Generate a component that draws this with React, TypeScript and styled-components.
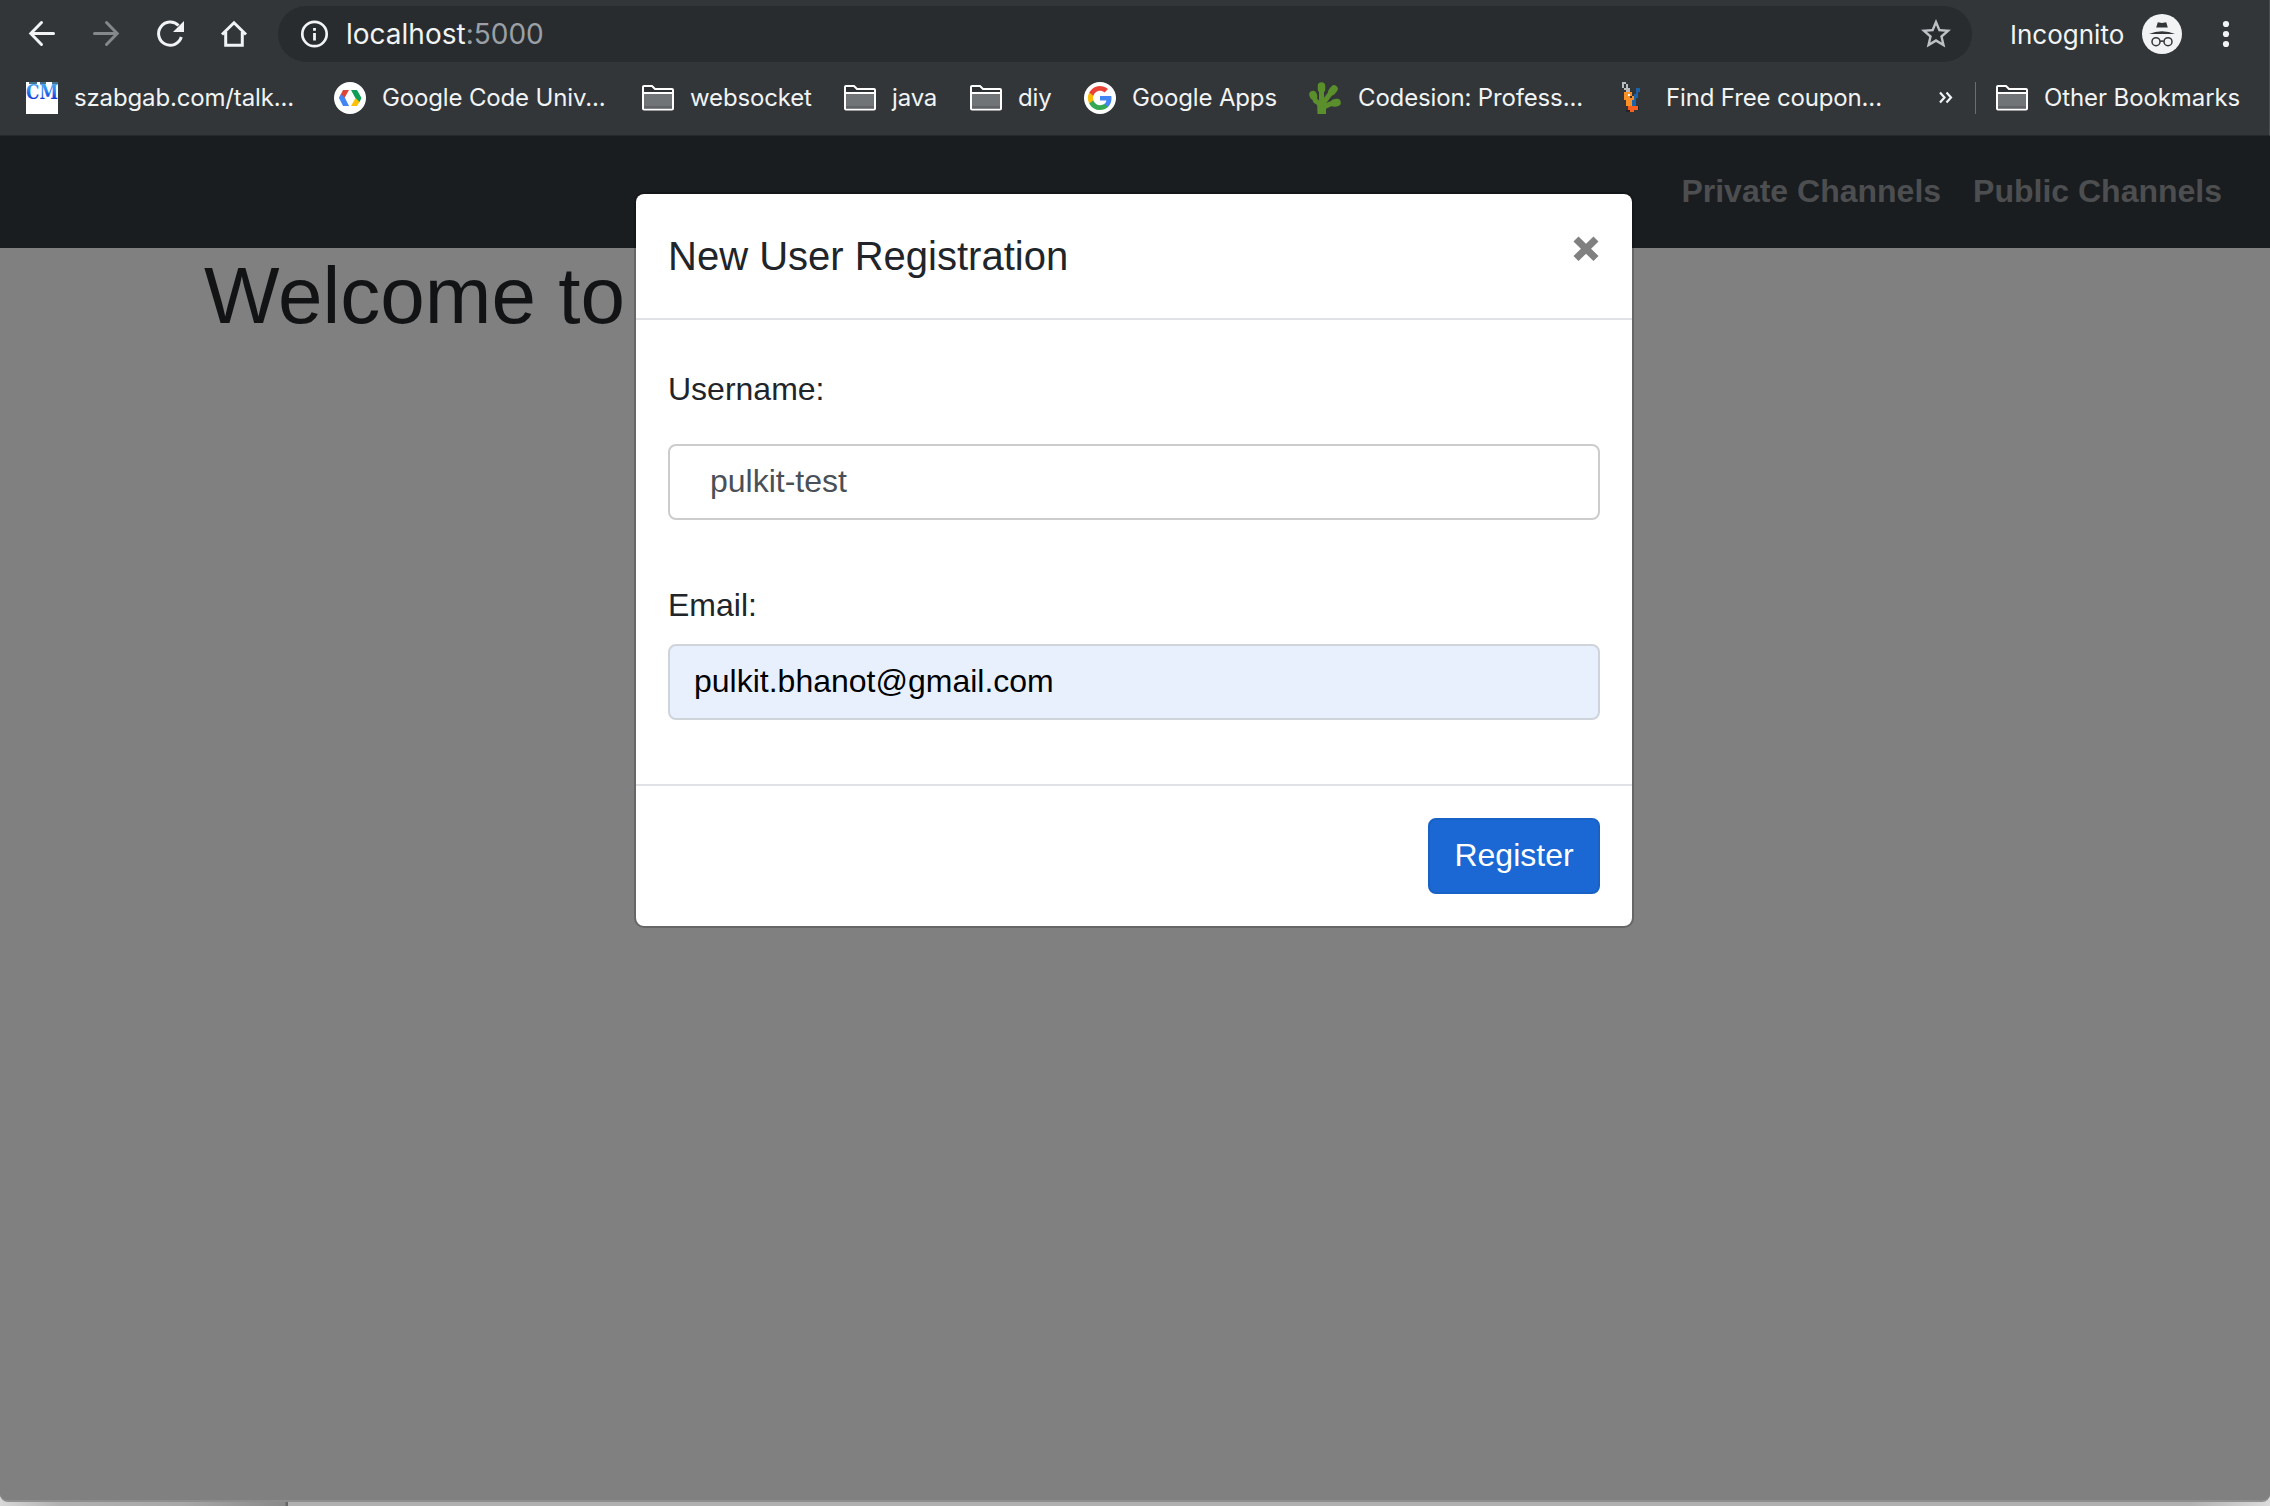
import React from "react";
import styled, { createGlobalStyle } from "styled-components";

const Global = createGlobalStyle`
  * { box-sizing: border-box; }
  html, body { margin: 0; padding: 0; }
  body { font-family: "Liberation Sans", Arial, sans-serif; background: #b0b0b0; overflow: hidden; }
  button { font: inherit; border: 0; padding: 0; background: none; display: block; }
  svg { display: block; flex: none; overflow: visible; }
`;

const Desktop = styled.div`
  width: 2270px;
  height: 1506px;
  display: flex;
  flex-direction: column;
  background: linear-gradient(90deg, #d8d8d8 0, #b0b0b0 60px, #a8a8a8 180px, #8a8a8a 285px, #666 286px, #666 288px, #b0b0b0 288px, #b0b0b0 2190px, #dcdcdc 2270px);
`;

const BrowserWindow = styled.div`
  height: 1502px;
  display: flex;
  flex-direction: column;
  border-radius: 0 0 8px 8px;
  overflow: hidden;
  background: #808080;
  border-bottom: 2px solid #8e8e8e;
`;

const Chrome = styled.header`
  height: 136px;
  flex: none;
  background: #323639;
  color: #f1f3f4;
  border-bottom: 1px solid #26292c;
  border-right: 1px solid #4b4e51;
  font-family: Inter, sans-serif;
`;

const Toolbar = styled.div`
  display: flex;
  align-items: center;
  height: 68px;
  padding: 0 0 0 26px;
`;

const NavButtons = styled.div`
  display: flex;
  gap: 32px;
`;

const Omnibox = styled.div`
  display: flex;
  align-items: center;
  width: 1694px;
  height: 56px;
  margin-left: 28px;
  padding: 0 18px 0 20px;
  border-radius: 28px;
  background: #292c2f;
`;

const Url = styled.div`
  flex: 1;
  margin-left: 14px;
  font-size: 28px;
  white-space: nowrap;
  color: #f1f3f4;
  span { color: #9aa0a6; }
`;

const Profile = styled.div`
  display: flex;
  align-items: center;
  justify-content: space-between;
  width: 172px;
  margin-left: 38px;
`;

const Label = styled.span<{ $size?: number; $spacing?: number; $lift?: number }>`
  font-size: ${(p) => p.$size ?? 24}px;
  letter-spacing: ${(p) => p.$spacing ?? -0.15}px;
  padding-bottom: ${(p) => p.$lift ?? 0}px;
  white-space: nowrap;
`;

const Kebab = styled.div`
  margin-left: 40px;
`;

const BookmarksBar = styled.div`
  display: flex;
  align-items: center;
  height: 60px;
  padding-left: 26px;
`;

const Bookmark = styled.div<{ $width: number; $gap?: number }>`
  display: flex;
  align-items: center;
  flex: none;
  gap: ${(p) => p.$gap ?? 16}px;
  width: ${(p) => p.$width}px;
`;

const Overflow = styled.div`
  width: 36px;
  flex: none;
`;

const Divider = styled.div`
  width: 1px;
  height: 32px;
  margin-right: 20px;
  background: #6b6e71;
`;

const Page = styled.main`
  flex: 1;
  display: grid;
  grid-template: 1fr / 1fr;
  background: #808080;
`;

const Content = styled.div`
  grid-area: 1 / 1;
`;

const Navbar = styled.nav`
  display: flex;
  justify-content: flex-end;
  gap: 32px;
  height: 112px;
  padding: 37px 48px 0 0;
  background: #1a1d20;
`;

const NavLink = styled.a`
  font-size: 32px;
  line-height: 36px;
  font-weight: 700;
  color: #4d4e50;
`;

const Welcome = styled.h1`
  margin: 0;
  padding: 0 0 0 204px;
  font-size: 80px;
  line-height: 96px;
  font-weight: 400;
  color: #121315;
`;

const Dialog = styled.section`
  grid-area: 1 / 1;
  justify-self: start;
  align-self: start;
  z-index: 1;
  width: 1000px;
  height: 736px;
  margin: 56px 0 0 634px;
  display: flex;
  flex-direction: column;
  border: 2px solid rgba(0, 0, 0, 0.2);
  border-radius: 10px;
  background: #fff;
  background-clip: padding-box;
  color: #212529;
`;

const DialogHeader = styled.div`
  display: flex;
  justify-content: space-between;
  height: 126px;
  padding: 32px;
  border-bottom: 2px solid #dee2e6;
`;

const DialogTitle = styled.h5`
  margin: 0;
  font-size: 40px;
  line-height: 60px;
  font-weight: 400;
`;

const CloseButton = styled.button`
  height: 44px;
  margin-right: 1px;
`;

const DialogBody = styled.form`
  flex: 1;
  padding: 0 32px;
`;

const Field = styled.div<{ $top: number; $gap: number }>`
  display: flex;
  flex-direction: column;
  gap: ${(p) => p.$gap}px;
  padding-top: ${(p) => p.$top}px;
`;

const FieldLabel = styled.label`
  font-size: 32px;
  line-height: 48px;
`;

const Input = styled.input<{ $filled?: boolean }>`
  height: 76px;
  padding: 0 ${(p) => (p.$filled ? 24 : 40)}px 2px;
  border: 2px solid ${(p) => (p.$filled ? "#ced4da" : "#cccccc")};
  border-radius: 8px;
  outline: 0;
  font: 32px/48px "Liberation Sans", Arial, sans-serif;
  color: ${(p) => (p.$filled ? "#000" : "#495057")};
  background: ${(p) => (p.$filled ? "#e8f0fe" : "#fff")};
`;

const DialogFooter = styled.div`
  display: flex;
  justify-content: flex-end;
  height: 142px;
  padding: 32px;
  border-top: 2px solid #dee2e6;
`;

const RegisterButton = styled.button`
  width: 172px;
  height: 76px;
  border: 2px solid #1862c6;
  border-radius: 8px;
  background: #1b68d5;
  color: #fff;
  font-size: 32px;
  line-height: 70px;
  padding-bottom: 2px;
`;

const Arrow = ({ forward }: { forward?: boolean }) => (
  <svg width="32" height="32" viewBox="-3 -3 32 32" fill="none" stroke={forward ? "#85888a" : "#f1f3f4"} strokeWidth="3">
    <g transform={forward ? "matrix(-1 0 0 1 26 0)" : undefined} strokeLinecap="round">
      <path d="M24.500 12.500H2M12.500 1.500 1.800 12.500 12.500 23.500" />
    </g>
  </svg>
);

const Reload = () => (
  <svg width="32" height="32" viewBox="-3 -3 32 32">
    <path d="M21.5 4.5A11.6 11.6 0 1 0 24.3 16" fill="none" stroke="#f1f3f4" strokeWidth="3" />
    <path d="M27 0V11H16Z" fill="#f1f3f4" />
  </svg>
);

const Home = () => (
  <svg width="32" height="32" viewBox="-3 -3 32 32" fill="none" stroke="#f1f3f4" strokeWidth="3">
    <path d="M1 13.5 13 1.8 25 13.5M4.7 11V24.3H21.3V11" />
  </svg>
);

const Info = () => (
  <svg width="34" height="34" viewBox="0 0 34 34">
    <circle cx="16.5" cy="17" r="12.200" fill="none" stroke="#f1f3f4" strokeWidth="2.7" />
    <path d="M15.1 11h2.8v2.8h-2.8zM15.1 16h2.8v7.4h-2.8z" fill="#f1f3f4" />
  </svg>
);

const Star = () => (
  <svg width="36" height="36" viewBox="0 0 24 24" fill="#bdc1c6">
    <path d="M22 9.24l-7.19-.62L12 2 9.19 8.63 2 9.24l5.46 4.73L5.82 21 12 17.27 18.18 21l-1.63-7.03L22 9.24zM12 15.4l-3.76 2.27 1-4.28-3.32-2.88 4.38-.38L12 6.1l1.71 4.04 4.38.38-3.32 2.88 1 4.28L12 15.4z" />
  </svg>
);

const Incognito = () => (
  <svg width="40" height="40" viewBox="0 0 40 40">
    <circle cx="20" cy="20" r="20" fill="#f1f3f4" />
    <path d="M15.8 8.2 20 9l4.2-.8L25.8 13.5H14.2ZM7 20.1Q13 17.3 20 17.3T33 20.1Z" fill="#323639" />
    <g fill="none" stroke="#323639" strokeWidth="1.5">
      <circle cx="14" cy="27.7" r="4" />
      <circle cx="26" cy="27.7" r="4" />
      <path d="M18 27.5q2-1.2 4 0" />
    </g>
  </svg>
);

const Dots = () => (
  <svg width="8" height="28" viewBox="0 0 8 28" fill="#f1f3f4">
    <circle cx="4" cy="4" r="3.1" />
    <circle cx="4" cy="14" r="3.1" />
    <circle cx="4" cy="24" r="3.1" />
  </svg>
);

const Folder = () => (
  <svg width="32" height="32" viewBox="0 0 32 32">
    <path d="M1 26.500V5Q1 4 2 4H10L13 7H30Q31 7 31 8V26.500Q31 27.500 30 27.500H2Q1 27.500 1 26.500Z" fill="#2d3134" stroke="#fff" strokeWidth="2" />
    <path d="M2 12h28v14.500H2Z" fill="#707477" />
    <path d="M1 11h30" stroke="#fff" strokeWidth="2" />
    <path d="M2 25h28" stroke="#606467" strokeWidth="2" />
  </svg>
);

const MediaIcon = () => (
  <svg width="32" height="32" viewBox="0 0 32 32">
    <defs>
      <linearGradient id="cm" gradientUnits="userSpaceOnUse" x1="0" y1="0" x2="0" y2="17">
        <stop offset="0" stopColor="#55aeee" />
        <stop offset="0.5" stopColor="#2f86f0" />
        <stop offset="1" stopColor="#1238dc" />
      </linearGradient>
    </defs>
    <path d="M0 0h32v32H0z" fill="#fff" />
    <path d="M3 0h8v2H3zM14 0h6v2h-6zM26 0h6v2h-6z" fill="#44748c" />
    <text x="0" y="16.500" textLength="32" lengthAdjust="spacingAndGlyphs" fontFamily="DejaVu Serif, serif" fontWeight="700" fontSize="21" fill="url(#cm)">CM</text>
  </svg>
);

const CodeIcon = () => (
  <svg width="32" height="32" viewBox="0 0 32 32">
    <circle cx="16" cy="16" r="16" fill="#fff" />
    <path d="M9 8h6l-4.500 8H5Z" fill="#db4437" />
    <path d="M5 16 7 12 11 16 15 24H9Z" fill="#4285f4" />
    <path d="M17 8h6l4.500 8-2 4H23.500Z" fill="#0f9d58" />
    <path d="M21.500 16 25.500 20 23 24h-6Z" fill="#ffc107" />
  </svg>
);

const GoogleIcon = () => (
  <svg width="32" height="32" viewBox="0 0 32 32">
    <circle cx="16" cy="16" r="16" fill="#fff" />
    <g transform="translate(4 4)">
      <path fill="#4285f4" d="M23.500 12.300c0-.8-.1-1.600-.2-2.300H12v4.500h6.500a5.500 5.500 0 0 1-2.400 3.600v3h3.900c2.200-2.100 3.500-5.100 3.500-8.800z" />
      <path fill="#34a853" d="M12 24c3.200 0 6-1.100 8-2.900l-3.900-3c-1.100.7-2.500 1.200-4.100 1.200-3.100 0-5.800-2.100-6.700-5H1.200v3.100A12 12 0 0 0 12 24z" />
      <path fill="#fbbc05" d="M5.300 14.300a7.200 7.200 0 0 1 0-4.600V6.600H1.200a12 12 0 0 0 0 10.800z" />
      <path fill="#ea4335" d="M12 4.800c1.800 0 3.300.6 4.600 1.800L20 3.100A12 12 0 0 0 1.200 6.600l4.100 3.100c.9-2.800 3.600-4.900 6.700-4.900z" />
    </g>
  </svg>
);

const CactusIcon = () => (
  <svg width="32" height="32" viewBox="0 0 32 32" fill="none" stroke="#5a8f2c" strokeLinecap="round" strokeLinejoin="round">
    <path d="M12.500 4V7M25 7 23 9.500M4 12.500 4.500 14M28 20.500 25.500 21" strokeWidth="7.500" />
    <path d="M12.500 4V24" strokeWidth="5" />
    <path d="M24 8 15 20" strokeWidth="5" />
    <path d="M4.500 13 6.500 19 11 22" strokeWidth="5" />
    <path d="M27 21 21 22 15 25" strokeWidth="5" />
    <path d="M8 19h9l0 13H8.500Z" fill="#5a8f2c" stroke="none" />
  </svg>
);

const MascotIcon = () => (
  <svg width="32" height="32" viewBox="0 0 32 32" shapeRendering="crispEdges">
    <path d="M4 0h4v2H4zM4 2h2v4H4zM8 2h2v4H8zM6 6h4v2H6zM10 6h2v4h-2zM8 8h2v2H8z" fill="#b9bcbe" />
    <path d="M8 28h4v2h6v-2h3v-4h-3v6H8z" fill="#222528" />
    <path d="M6 10h8v4h2v4h-2v6h6v4h-4v2h-4v-2H10v-4H8v-6H6z" fill="#fa9128" />
    <path d="M10 24h10v4h-4v2h-4v-2h-2z" fill="#f7601f" />
    <path d="M18 6h4v4h-2v6h-2v8h-4v-6h2v-6h2z" fill="#1b62a8" />
    <path d="M10 12h2v2h-2z" fill="#fff" />
    <path d="M12 14h2v2h-2z" fill="#3a3024" />
  </svg>
);

const CloseIcon = () => (
  <svg width="26" height="44" viewBox="0 0 26 44">
    <path d="M3 13 23 32.500M23 13 3 32.500" stroke="#808080" strokeWidth="7.200" />
  </svg>
);

const Chevrons = () => (
  <svg width="14" height="14" viewBox="0 0 14 14" fill="none" stroke="#f1f3f4" strokeWidth="2.200">
    <path d="M1 1.500 5.500 6.500 1 11.500M7.500 1.500 12 6.500 7.500 11.500" />
  </svg>
);

const bookmarks = [
  { icon: <MediaIcon />, text: "szabgab.com/talk...", width: 308 },
  { icon: <CodeIcon />, text: "Google Code Univ...", width: 308 },
  { icon: <Folder />, text: "websocket", width: 202 },
  { icon: <Folder />, text: "java", width: 126 },
  { icon: <Folder />, text: "diy", width: 114 },
  { icon: <GoogleIcon />, text: "Google Apps", width: 225 },
  { icon: <CactusIcon />, text: "Codesion: Profess...", width: 309, gap: 17 },
  { icon: <MascotIcon />, text: "Find Free coupon...", width: 321 },
];

export default function App() {
  return (
    <>
      <Global />
      <Desktop>
        <BrowserWindow>
          <Chrome>
            <Toolbar>
              <NavButtons>
                <Arrow />
                <Arrow forward />
                <Reload />
                <Home />
              </NavButtons>
              <Omnibox>
                <Info />
                <Url>localhost<span>:5000</span></Url>
                <Star />
              </Omnibox>
              <Profile>
                <Label $size={26} $spacing={0}>Incognito</Label>
                <Incognito />
              </Profile>
              <Kebab><Dots /></Kebab>
            </Toolbar>
            <BookmarksBar>
              {bookmarks.map((b) => (
                <Bookmark key={b.text} $width={b.width} $gap={b.gap}>
                  {b.icon}
                  <Label $lift={2}>{b.text}</Label>
                </Bookmark>
              ))}
              <Overflow><Chevrons /></Overflow>
              <Divider />
              <Bookmark $width={250}>
                <Folder />
                <Label $lift={2} $spacing={-0.1}>Other Bookmarks</Label>
              </Bookmark>
            </BookmarksBar>
          </Chrome>
          <Page>
            <Content>
              <Navbar>
                <NavLink>Private Channels</NavLink>
                <NavLink>Public Channels</NavLink>
              </Navbar>
              <Welcome>Welcome to</Welcome>
            </Content>
            <Dialog>
              <DialogHeader>
                <DialogTitle>New User Registration</DialogTitle>
                <CloseButton type="button" aria-label="Close"><CloseIcon /></CloseButton>
              </DialogHeader>
              <DialogBody>
                <Field $top={45} $gap={31}>
                  <FieldLabel htmlFor="username">Username:</FieldLabel>
                  <Input id="username" defaultValue="pulkit-test" />
                </Field>
                <Field $top={61} $gap={15}>
                  <FieldLabel htmlFor="email">Email:</FieldLabel>
                  <Input id="email" $filled defaultValue="pulkit.bhanot@gmail.com" />
                </Field>
              </DialogBody>
              <DialogFooter>
                <RegisterButton type="button">Register</RegisterButton>
              </DialogFooter>
            </Dialog>
          </Page>
        </BrowserWindow>
      </Desktop>
    </>
  );
}
